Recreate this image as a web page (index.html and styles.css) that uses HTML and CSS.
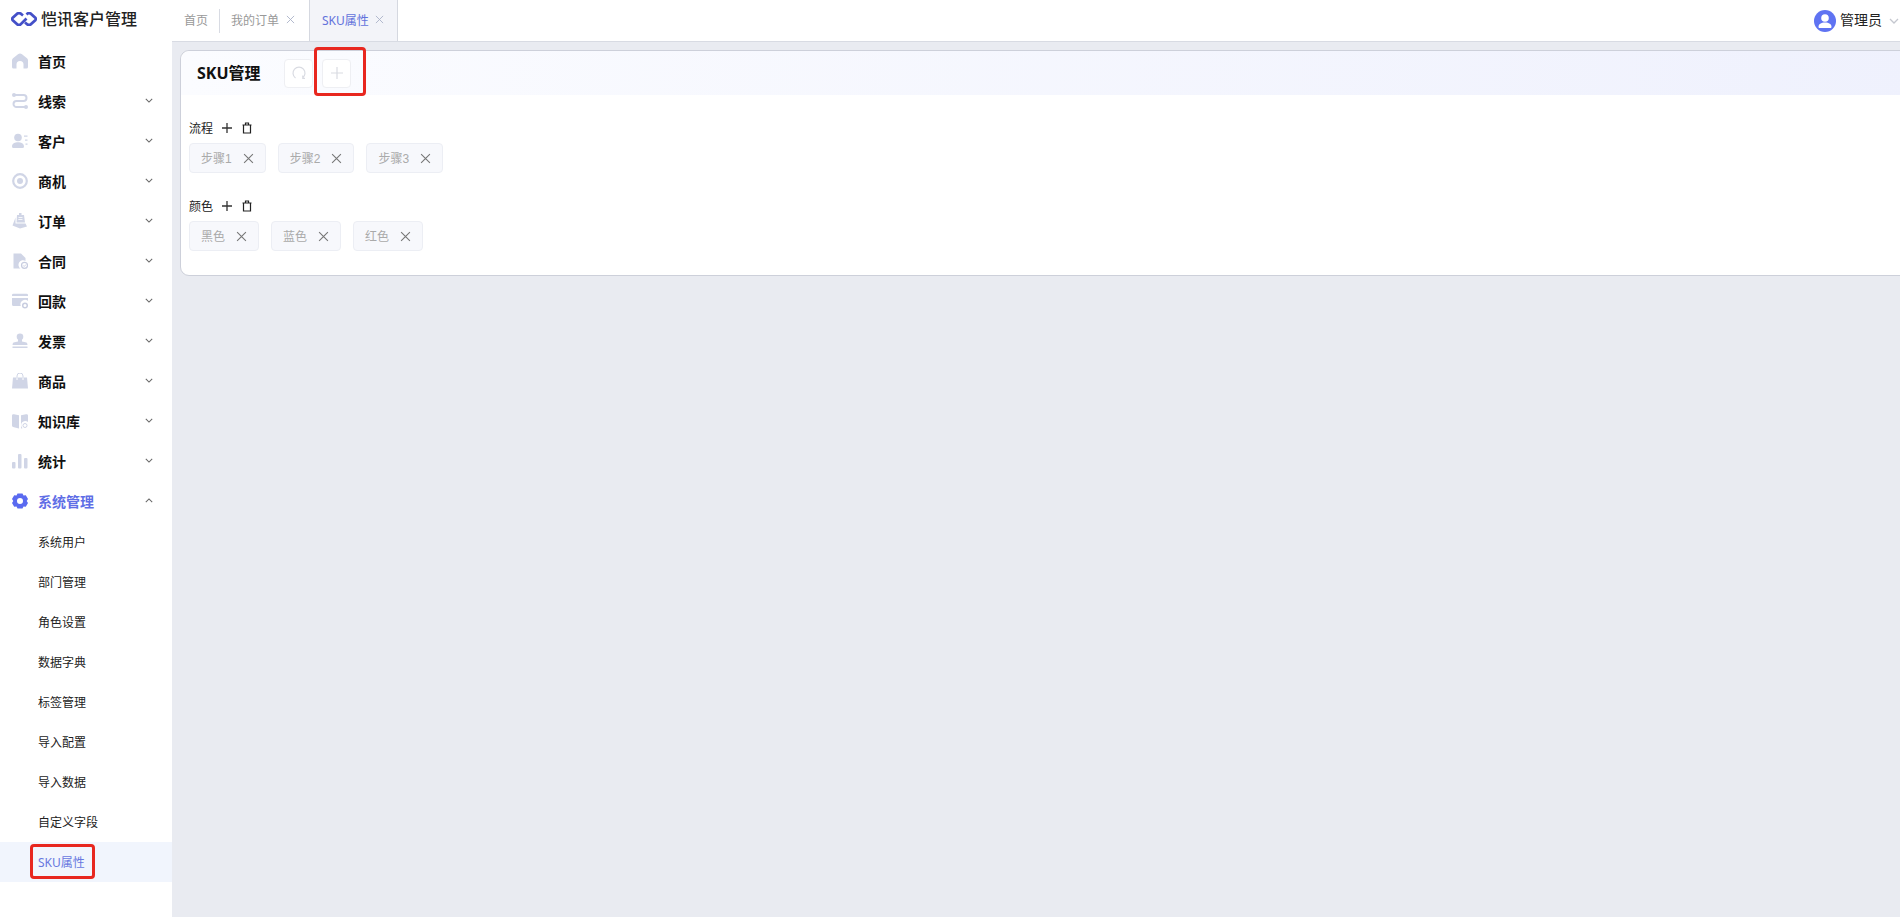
FILE: index.html
```html
<!DOCTYPE html>
<html lang="zh-CN">
  <head>
    <meta charset="UTF-8" />
    <meta name="viewport" content="width=device-width, initial-scale=1.0" />
    <title>SKU属性</title>
    <link rel="stylesheet" href="styles.css">
  </head>
  <body>
    <svg class="defs" width="0" height="0">
      <symbol id="chev" viewBox="0 0 10 6"><path d="M1 1l4 4 4-4" fill="none" stroke="currentColor" stroke-width="1.3" /></symbol>
      <symbol id="x" viewBox="0 0 10 10"><path d="M1 1l8 8M9 1l-8 8" fill="none" stroke="currentColor" stroke-width="1" /></symbol>
    </svg>

    <aside class="sidebar">
      <div class="logo">
        <svg class="logo-mark" viewBox="0 0 26 14"><path d="M12 3.500L9.500 1.500Q8 .8 6.500 1.500L1.500 6Q.8 7 1.500 8L6.500 12.500Q8 13.200 9.500 12.500L12.500 9.500L15.500 6.500M14 10.500L16.500 12.500Q18 13.200 19.500 12.500L24.500 8Q25.200 7 24.500 6L19.500 1.500Q18 .8 16.500 1.500L15.500 2.500" fill="none" stroke="#4450c8" stroke-width="2.700" /></svg>
        <span>恺讯客户管理</span>
      </div>

      <nav class="menu">
        <a class="menu-item">
          <svg class="menu-icon" viewBox="0 0 16 16"><path d="M8 .5Q9 .5 10 1.200L15 5.200Q16 6 16 7.200V14Q16 15.500 14.500 15.500H11.500V11.500A3.500 3.500 0 0 0 4.500 11.500V15.500H1.500Q0 15.500 0 14V7.200Q0 6 1 5.200L6 1.200Q7 .5 8 .5z" /></svg>
          <span>首页</span>
        </a>
        <a class="menu-item">
          <svg class="menu-icon" viewBox="0 0 16 16"><path d="M2 2H11.500A3 3 0 0 1 11.500 8H4.500A3 3 0 0 0 4.500 14H14" fill="none" stroke="#d0d5e6" stroke-width="2" /><circle cx="2" cy="2" r="2" /><circle cx="14" cy="14" r="2" /></svg>
          <span>线索</span>
          <svg class="chev"><use href="#chev" /></svg>
        </a>
        <a class="menu-item">
          <svg class="menu-icon" viewBox="0 0 16 16"><circle cx="6" cy="4.500" r="3.800" /><path d="M0 13.500C0 10.500 3 9.300 6 9.300S12 10.500 12 13.500Q12 15 10.500 15H1.500Q0 15 0 13.500zM12 2.500h3.500v1.300H12zM13 6.500h2.500v1.300H13zM13.500 10.500h2v1.300h-2z" /></svg>
          <span>客户</span>
          <svg class="chev"><use href="#chev" /></svg>
        </a>
        <a class="menu-item">
          <svg class="menu-icon" viewBox="0 0 16 16"><circle cx="8" cy="8" r="6.800" fill="none" stroke="#d0d5e6" stroke-width="2.200" /><circle cx="8" cy="8" r="3" /></svg>
          <span>商机</span>
          <svg class="chev"><use href="#chev" /></svg>
        </a>
        <a class="menu-item">
          <svg class="menu-icon" viewBox="0 0 16 16"><path d="M7 0h2.500v2H12L13 9.500H4.500L5 2H7zM3.500 4.500L.5 12.500 8 15.500 15 13.500 13.500 10.500H3.500z" /><path d="M6.500 4.500h4M6.300 6.500h4.200" stroke="#fff" stroke-width=".8" /></svg>
          <span>订单</span>
          <svg class="chev"><use href="#chev" /></svg>
        </a>
        <a class="menu-item">
          <svg class="menu-icon" viewBox="0 0 16 16"><path d="M1.500.5H9L13.500 5V8A4.500 4.500 0 0 0 8.500 15.500H1.500z" /><circle cx="12.500" cy="12.300" r="3" fill="none" stroke="#c8cde0" stroke-width="1.200" /><path d="M11 12.300l1.200 1.200 1.800-2" fill="none" stroke="#c8cde0" stroke-width=".9" /></svg>
          <span>合同</span>
          <svg class="chev"><use href="#chev" /></svg>
        </a>
        <a class="menu-item">
          <svg class="menu-icon" viewBox="0 0 16 16"><path d="M0 2Q0 .8 1.500 .8H14.500Q16 .8 16 2V3H0zM0 5h16v3A4.500 4.500 0 0 0 8.800 13H1.500Q0 13 0 11.500z" /><circle cx="13" cy="12.500" r="2.300" fill="none" stroke="#c8cde0" stroke-width="1.500" /></svg>
          <span>回款</span>
          <svg class="chev"><use href="#chev" /></svg>
        </a>
        <a class="menu-item">
          <svg class="menu-icon" viewBox="0 0 16 16"><circle cx="8" cy="3.800" r="3.300" /><path d="M6 6h4v2.500L14.500 9.500Q15.500 10 15.500 12H.5Q.5 10 1.500 9.500L6 8.500zM.5 13.500h15v1.500H.5z" /></svg>
          <span>发票</span>
          <svg class="chev"><use href="#chev" /></svg>
        </a>
        <a class="menu-item">
          <svg class="menu-icon" viewBox="0 0 16 16"><path d="M1 4.500h14l1 11H0z" /><path d="M5 7V3a3 3 0 0 1 6 0V7" fill="none" stroke="#d0d5e6" stroke-width="1" /><path d="M5 4.500V7M11 4.500V7" stroke="#fff" stroke-width="1" /></svg>
          <span>商品</span>
          <svg class="chev"><use href="#chev" /></svg>
        </a>
        <a class="menu-item">
          <svg class="menu-icon" viewBox="0 0 16 16"><path d="M0 2.500C0 1.500 1 1 2 1.200L7 2.300V15.500L2 14.300C1 14 0 13.800 0 12.500zM9 2.300L14 1.200C15 1 16 1.500 16 2.500V9A3.500 3.500 0 0 0 10.500 15.200L9 15.500z" /><circle cx="13" cy="12.500" r="2" fill="none" stroke="#d0d5e6" stroke-width="1" /></svg>
          <span>知识库</span>
          <svg class="chev"><use href="#chev" /></svg>
        </a>
        <a class="menu-item">
          <svg class="menu-icon" viewBox="0 0 16 16"><rect x="0" y="9" width="3.500" height="6.500" rx="1" /><rect x="6" y="1" width="3.500" height="14.500" rx="1" /><rect x="12" y="5" width="3.500" height="10.500" rx="1" /></svg>
          <span>统计</span>
          <svg class="chev"><use href="#chev" /></svg>
        </a>
        <a class="menu-item open">
          <svg class="menu-icon" viewBox="0 0 16 16"><path fill-rule="evenodd" d="M5.500.5h5l1 2 2.300-.2L16 6l-1.300 2L16 10l-2.200 3.700-2.300-.2-1 2h-5l-1-2-2.300.2L0 10l1.300-2L0 6l2.200-3.700 2.300.2zM8 5a3 3 0 1 0 0 6 3 3 0 0 0 0-6z" /></svg>
          <span>系统管理</span>
          <svg class="chev up"><use href="#chev" /></svg>
        </a>
        <a class="sub-item">系统用户</a>
        <a class="sub-item">部门管理</a>
        <a class="sub-item">角色设置</a>
        <a class="sub-item">数据字典</a>
        <a class="sub-item">标签管理</a>
        <a class="sub-item">导入配置</a>
        <a class="sub-item">导入数据</a>
        <a class="sub-item">自定义字段</a>
        <a class="sub-item active">SKU属性<span class="mark mark-nav"></span></a>
      </nav>
    </aside>

    <div class="content">
      <header class="topbar">
        <div class="tab">首页</div>
        <div class="tab-line"></div>
        <div class="tab">我的订单<svg class="tab-close"><use href="#x" /></svg></div>
        <div class="tab current">SKU属性<svg class="tab-close"><use href="#x" /></svg></div>
        <div class="user">
          <svg class="avatar" viewBox="0 0 22 22"><circle cx="11" cy="11" r="11" fill="#5f73f2" /><circle cx="11" cy="8" r="3.800" fill="#fff" /><path d="M4.500 17C4.500 14 7 12.500 11 12.500S17.500 14 17.500 17C17.500 17.500 17 18 16.500 18H5.500C5 18 4.500 17.500 4.500 17z" fill="#fff" /></svg>
          <span class="user-name">管理员</span>
          <svg class="user-chev"><use href="#chev" /></svg>
        </div>
      </header>

      <main class="main">
        <section class="card">
          <div class="card-head">
            <h2>SKU管理</h2>
            <button type="button" class="tool">
              <svg viewBox="0 0 14 14" width="14" height="14"><path d="M3.500 12A6 6 0 1 1 10.500 12M10.800 9.500V12.300H13" fill="none" stroke="#d9dbe2" stroke-width="1.200" /></svg>
            </button>
            <button type="button" class="tool plus">
              <svg viewBox="0 0 14 14" width="14" height="14"><path d="M7 1v12M1 7h12" fill="none" stroke="#d9dbe2" stroke-width="1.200" /></svg>
              <span class="mark mark-add"></span>
            </button>
          </div>

          <div class="card-body">
            <div class="attr">
              <div class="attr-title">
                <span>流程</span>
                <svg class="act" viewBox="0 0 12 12"><path d="M6 1v10M1 6h10" fill="none" stroke="#333" stroke-width="1.300" /></svg>
                <svg class="act" viewBox="0 0 12 12"><path d="M2.500 3h7v8h-7zM1.500 3h9M4.500 3V1h3v2" fill="none" stroke="#222" stroke-width="1.200" /></svg>
              </div>
              <div class="tags">
                <span class="tag">步骤1<svg class="tag-x"><use href="#x" /></svg></span>
                <span class="tag">步骤2<svg class="tag-x"><use href="#x" /></svg></span>
                <span class="tag">步骤3<svg class="tag-x"><use href="#x" /></svg></span>
              </div>
            </div>
            <div class="attr">
              <div class="attr-title">
                <span>颜色</span>
                <svg class="act" viewBox="0 0 12 12"><path d="M6 1v10M1 6h10" fill="none" stroke="#333" stroke-width="1.300" /></svg>
                <svg class="act" viewBox="0 0 12 12"><path d="M2.500 3h7v8h-7zM1.500 3h9M4.500 3V1h3v2" fill="none" stroke="#222" stroke-width="1.200" /></svg>
              </div>
              <div class="tags">
                <span class="tag">黑色<svg class="tag-x"><use href="#x" /></svg></span>
                <span class="tag">蓝色<svg class="tag-x"><use href="#x" /></svg></span>
                <span class="tag">红色<svg class="tag-x"><use href="#x" /></svg></span>
              </div>
            </div>
          </div>
        </section>
      </main>
    </div>
  </body>
</html>
```

FILE: styles.css
```css
* {
  box-sizing: border-box;
}

body {
  margin: 0;
  height: 917px;
  display: flex;
  overflow: hidden;
  background-color: #fff;
  font-family: "Noto Sans", "Noto Sans CJK SC", sans-serif;
  font-size: 12px;
  color: #222;
}

.defs {
  position: absolute;
}

/* sidebar */
.sidebar {
  width: 172px;
  flex: none;
  background-color: #fff;
}

.logo {
  height: 42px;
  padding: 0 0 6px 11px;
  display: flex;
  align-items: center;
  gap: 4px;
  font-size: 16px;
  font-weight: 500;
  color: #222;
}

.logo-mark {
  width: 26px;
  height: 14px;
  margin-top: 2px;
}

.menu-item {
  height: 40px;
  padding: 0 0 2px 12px;
  display: flex;
  align-items: center;
  font-size: 14px;
  font-weight: 700;
  color: #111;
}

.menu-icon {
  width: 16px;
  height: 16px;
  margin-right: 10px;
  fill: #d0d5e6;
}

.chev {
  width: 8px;
  height: 5px;
  margin-left: auto;
  margin-right: 19px;
  margin-top: -1px;
  color: #666;
}

.chev.up {
  transform: rotate(180deg);
}

.menu-item.open {
  color: #5f6ee6;
}

.menu-item.open .menu-icon {
  fill: #5a6af0;
}

.sub-item {
  height: 40px;
  padding-left: 38px;
  display: flex;
  align-items: center;
  position: relative;
  color: #222;
}

.sub-item.active {
  background-color: #f1f5fd;
  color: #6878e0;
}

/* red annotation boxes on the screenshot */
.mark {
  position: absolute;
  border: 3px solid #e8271f;
  border-radius: 4px;
}

.mark-nav {
  left: 30px;
  top: 2px;
  width: 65px;
  height: 35px;
}

.mark-add {
  left: -9px;
  top: -13px;
  width: 52px;
  height: 49px;
}

/* top tabs */
.content {
  flex: 1;
  min-width: 0;
  display: flex;
  flex-direction: column;
}

.topbar {
  height: 42px;
  flex: none;
  display: flex;
  align-items: center;
  padding-left: 12px;
  background-color: #fff;
  border-bottom: 1px solid #d8dbe3;
  color: #999;
}

.tab {
  height: 41px;
  padding-bottom: 2px;
  display: flex;
  align-items: center;
}

.tab-line {
  width: 1px;
  height: 24px;
  margin: 0 11px;
  background-color: #d8dbe3;
}

.tab-close {
  width: 9px;
  height: 9px;
  margin-left: 7px;
  color: #aab2c8;
}

.tab.current {
  margin-left: 14px;
  padding: 0 13px 2px 12px;
  background-color: #f3f4f9;
  border-left: 1px solid #d5d8e0;
  border-right: 1px solid #d5d8e0;
  color: #6272dc;
}

.tab.current .tab-close {
  margin-left: 6px;
}

.user {
  margin-left: auto;
  display: flex;
  align-items: center;
  padding-right: 1px;
  font-size: 14px;
  color: #222;
}

.avatar {
  width: 22px;
  height: 22px;
  margin-right: 4px;
}

.user-name {
  margin-top: -3px;
}

.user-chev {
  width: 10px;
  height: 6px;
  margin-left: 7px;
  color: #c4c7cf;
}

/* page */
.main {
  flex: 1;
  padding: 8px 0 0 8px;
  background-color: #e9ebf1;
}

.card {
  width: 1740px;
  height: 226px;
  background-color: #fff;
  border: 1px solid #cdd0da;
  border-radius: 9px;
}

.card-head {
  height: 44px;
  padding-left: 16px;
  display: flex;
  align-items: center;
  background: linear-gradient(90deg, #fbfcff, #eff1fd);
  border-radius: 9px 9px 0 0;
}

.card-head h2 {
  width: 87px;
  margin: 0 0 2px;
  font-size: 16px;
  font-weight: 700;
  color: #111;
}

.tool {
  width: 29px;
  height: 29px;
  margin-right: 9px;
  padding: 0;
  display: flex;
  align-items: center;
  justify-content: center;
  position: relative;
  background-color: #fff;
  border: 1px solid #eeeff3;
  border-radius: 4px;
}

.card-body {
  padding: 21px 8px 0;
}

.attr {
  margin-bottom: 21px;
}

.attr-title {
  height: 24px;
  display: flex;
  align-items: center;
  margin-bottom: 3px;
  color: #222;
}

.act {
  width: 12px;
  height: 12px;
  margin-left: 8px;
}

.tags {
  display: flex;
  gap: 12px;
}

.tag {
  height: 30px;
  padding: 0 11px 2px;
  display: flex;
  align-items: center;
  background-color: #f7f8fc;
  border: 1px solid #eceef4;
  border-radius: 4px;
  font-family: "Liberation Sans", "Noto Sans CJK SC", sans-serif;
  color: #aaa;
}

.tag-x {
  width: 11px;
  height: 11px;
  margin-left: 11px;
  margin-top: 2px;
  color: #777;
}
```
